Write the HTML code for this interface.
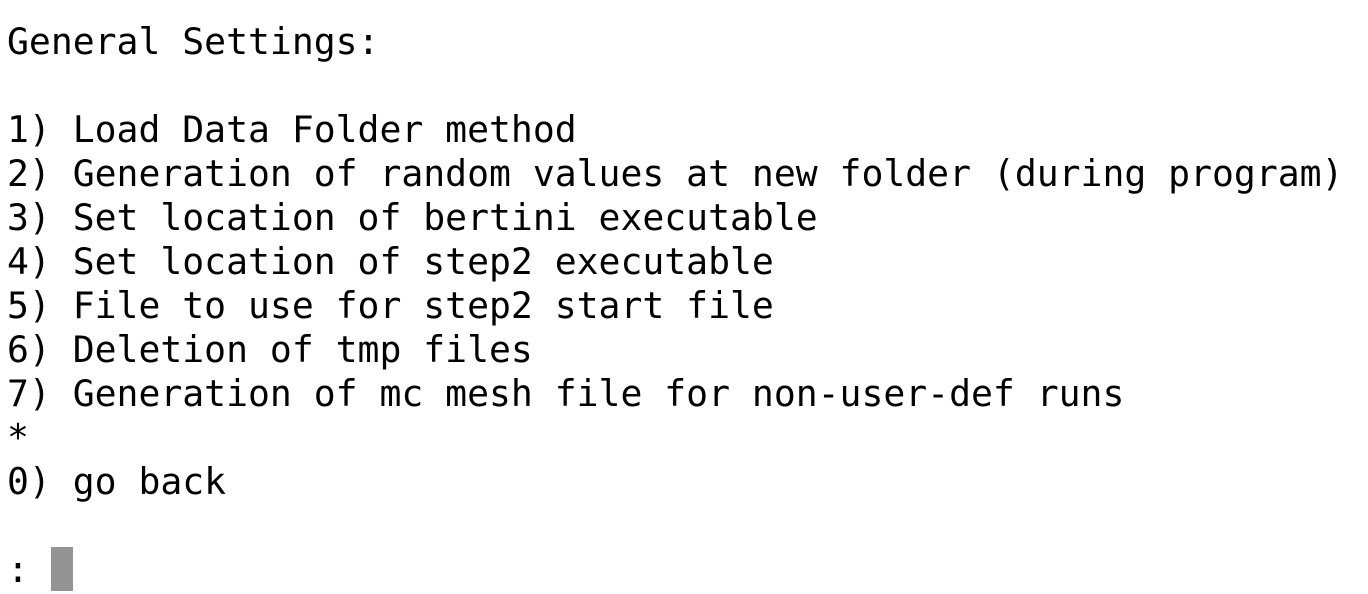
<!DOCTYPE html>
<html><head><meta charset="utf-8"><style>
html,body{margin:0;padding:0;background:#fff;width:1368px;height:594px;overflow:hidden}
pre{margin:0;padding:20px 0 0 7px;font-family:"DejaVu Sans Mono","Liberation Mono",monospace;font-size:36.4px;line-height:44px;color:#000}
.cur{display:inline-block;width:22px;height:44px;background:#949494;vertical-align:top;margin-top:-1px}
</style></head><body><pre>General Settings:

1) Load Data Folder method
2) Generation of random values at new folder (during program)
3) Set location of bertini executable
4) Set location of step2 executable
5) File to use for step2 start file
6) Deletion of tmp files
7) Generation of mc mesh file for non-user-def runs
*
0) go back

: <span class="cur"></span></pre></body></html>
